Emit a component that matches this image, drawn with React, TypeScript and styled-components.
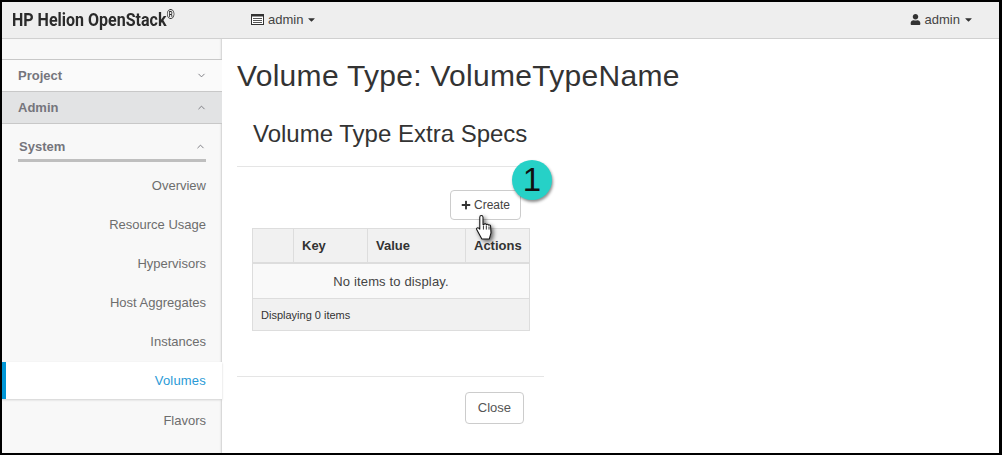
import styled, { createGlobalStyle } from "styled-components";
import { FaPlus, FaUser, FaCaretDown } from "react-icons/fa";
import { LuChevronDown, LuChevronUp } from "react-icons/lu";

const Global = createGlobalStyle`
    html, body {
        margin: 0;
        padding: 0;
        background: #fff;
    }
`;

const Frame = styled.div`
    width: 1002px;
    height: 455px;
    box-sizing: border-box;
    border: 2px solid #000;
    border-right-width: 3px;
    display: flex;
    flex-direction: column;
    overflow: hidden;
    font-family: "Liberation Sans", Arial, sans-serif;
    color: #333;
`;

const Navbar = styled.div`
    height: 37px;
    flex: none;
    box-sizing: border-box;
    background: #eeeeee;
    border-bottom: 1px solid #d0d0d0;
    display: flex;
    align-items: center;
    padding: 0 25px 2px 10px;
    font-size: 13px;
`;

const BrandSlot = styled.div`
    width: 239px;
`;

const Brand = styled.div`
    font-family: "Roboto", sans-serif;
    font-weight: 700;
    font-size: 18px;
    color: #2b2b2b;
    white-space: nowrap;
    transform: scaleX(0.89);
    transform-origin: left center;
    sup {
        font-size: 12px;
        line-height: 0;
    }
`;

const NavMenu = styled.div`
    display: flex;
    align-items: center;
    gap: 4px;
    color: #444;
    svg:last-child {
        margin-left: -1px;
    }
`;

const Spacer = styled.div`
    flex: 1;
`;

const Body = styled.div`
    flex: 1;
    display: flex;
    min-height: 0;
`;

const Sidebar = styled.div`
    width: 220px;
    flex: none;
    box-sizing: border-box;
    background: #f8f8f8;
    padding-top: 20px;
    box-shadow: inset -2px 0 2px -1px #cfcfcf;
`;

const Section = styled.div<{ $active?: boolean }>`
    height: 32px;
    box-sizing: border-box;
    display: flex;
    align-items: center;
    justify-content: space-between;
    padding: 0 15px 0 16px;
    border-top: 1px solid #c8c8c8;
    font-size: 13px;
    font-weight: 700;
    color: #75757c;
    background: ${props => props.$active ? "#e2e3e4" : "#fafafa"};
`;

const SystemGroup = styled.div`
    border-top: 1px solid #c8c8c8;
    margin-bottom: 4px;
    padding: 0 16px;
`;

const SystemHeader = styled.div`
    height: 38px;
    box-sizing: border-box;
    padding: 9px 0 0 1px;
    display: flex;
    align-items: center;
    justify-content: space-between;
    border-bottom: 3px solid #bfbfbf;
    font-size: 13px;
    font-weight: 700;
    color: #75757c;
`;

const NavItem = styled.div<{ $selected?: boolean }>`
    height: ${props => props.$selected ? "37px" : "39px"};
    margin: ${props => props.$selected ? "1px 0 2px" : "0"};
    box-sizing: border-box;
    display: flex;
    align-items: center;
    justify-content: flex-end;
    padding-right: 16px;
    font-size: 13px;
    letter-spacing: ${props => props.$selected ? "0.2px" : "0"};
    color: ${props => props.$selected ? "#2a9ad6" : "#6d6d6d"};
    background: ${props => props.$selected ? "#fff" : "transparent"};
    border-left: ${props => props.$selected ? "4px solid #0096d6" : "none"};
    box-shadow: ${props => props.$selected ? "0 1px 2px #d0d0d0" : "none"};
`;

const Main = styled.div`
    flex: 1;
    padding: 0 15px;
    min-width: 0;
`;

const Title = styled.h1`
    font-size: 30px;
    font-weight: 400;
    line-height: 34px;
    letter-spacing: 0.3px;
    margin: 20px 0 0 0;
    color: #333;
`;

const Panel = styled.div`
    width: 307px;
    position: relative;
`;

const PanelTitle = styled.h2`
    font-size: 24px;
    font-weight: 400;
    line-height: 26px;
    margin: 28px 0 0 16px;
    padding: 0;
    color: #333;
    white-space: nowrap;
`;

const Rule = styled.div`
    height: 1px;
    background: #e5e5e5;
`;

const TopRule = styled(Rule)`
    margin-top: 19px;
`;

const BottomRule = styled(Rule)`
    margin-top: 45px;
`;

const Actions = styled.div`
    display: flex;
    justify-content: flex-end;
    padding: 23px 23px 8px 0;
`;

const Button = styled.div`
    height: 30px;
    box-sizing: border-box;
    padding: 0 10px;
    display: flex;
    align-items: center;
    gap: 3px;
    border: 1px solid #ccc;
    border-radius: 4px;
    background: #fff;
    font-size: 12px;
    color: #444;
    svg {
        color: #333;
    }
`;

const Table = styled.div`
    margin-left: 15px;
    width: 278px;
    box-sizing: border-box;
    border: 1px solid #ddd;
    font-size: 13px;
`;

const HeadRow = styled.div`
    display: grid;
    grid-template-columns: 40px 74px 98px 1fr;
    height: 35px;
    box-sizing: border-box;
    background: #f1f1f1;
    border-bottom: 2px solid #ddd;
`;

const HeadCell = styled.div`
    display: flex;
    align-items: center;
    padding-left: 8px;
    font-weight: 700;
    color: #333;
    white-space: nowrap;
    border-left: 1px solid #ddd;
    &:first-child {
        border-left: none;
    }
`;

const EmptyRow = styled.div`
    height: 35px;
    box-sizing: border-box;
    background: #f9f9f9;
    border-bottom: 1px solid #ddd;
    display: flex;
    align-items: center;
    justify-content: center;
    letter-spacing: 0.15px;
    color: #444;
`;

const FootRow = styled.div`
    height: 31px;
    display: flex;
    align-items: center;
    padding-left: 8px;
    background: #f1f1f1;
    font-size: 11px;
    color: #333;
`;

const Footer = styled.div`
    display: flex;
    justify-content: flex-end;
    padding: 15px 20px 0 0;
`;

const CloseButton = styled(Button)`
    height: 32px;
    padding: 0 12px 2px;
    font-size: 13px;
    color: #555;
`;

const Badge = styled.div`
    position: absolute;
    left: 275px;
    top: 39px;
    width: 40px;
    height: 40px;
    border-radius: 50%;
    background: #26d1c7;
    box-shadow: 1px 2px 3px rgba(0, 0, 0, 0.45);
    display: flex;
    align-items: center;
    justify-content: center;
    font-size: 33px;
    color: #111;
`;

const Cursor = styled.svg`
    position: absolute;
    left: 238px;
    top: 93px;
    filter: drop-shadow(2px 2px 2px rgba(0, 0, 0, 0.6));
`;

function ConsoleIcon() {
    return (
        <svg width="13" height="11" viewBox="0 0 13 11">
            <rect x="0.5" y="0.5" width="12" height="10" fill="#fff" stroke="#333" />
            <rect x="0" y="0" width="13" height="2.5" fill="#333" />
            <path d="M2 4.5h9M2 6.5h9M2 8.5h9" stroke="#555" />
        </svg>
    );
}

export default function App() {
    const items = ["Overview", "Resource Usage", "Hypervisors", "Host Aggregates", "Instances"];

    return (
        <Frame>
            <Global />
            <Navbar>
                <BrandSlot>
                    <Brand>HP Helion OpenStack<sup>®</sup></Brand>
                </BrandSlot>
                <NavMenu>
                    <ConsoleIcon />
                    admin
                    <FaCaretDown size={11} color="#333" />
                </NavMenu>
                <Spacer />
                <NavMenu>
                    <FaUser size={11} color="#333" />
                    admin
                    <FaCaretDown size={11} color="#333" />
                </NavMenu>
            </Navbar>
            <Body>
                <Sidebar>
                    <Section>Project <LuChevronDown size={11} /></Section>
                    <Section $active>Admin <LuChevronUp size={11} /></Section>
                    <SystemGroup>
                        <SystemHeader>System <LuChevronUp size={11} /></SystemHeader>
                    </SystemGroup>
                    {items.map((x: string, i: number) => <NavItem key={i}>{x}</NavItem>)}
                    <NavItem $selected>Volumes</NavItem>
                    <NavItem>Flavors</NavItem>
                </Sidebar>
                <Main>
                    <Title>Volume Type: VolumeTypeName</Title>
                    <Panel>
                        <PanelTitle>Volume Type Extra Specs</PanelTitle>
                        <TopRule />
                        <Actions>
                            <Button><FaPlus size={10} /> Create</Button>
                        </Actions>
                        <Table>
                            <HeadRow>
                                <HeadCell />
                                <HeadCell>Key</HeadCell>
                                <HeadCell>Value</HeadCell>
                                <HeadCell>Actions</HeadCell>
                            </HeadRow>
                            <EmptyRow>No items to display.</EmptyRow>
                            <FootRow>Displaying 0 items</FootRow>
                        </Table>
                        <BottomRule />
                        <Footer>
                            <CloseButton>Close</CloseButton>
                        </Footer>
                        <Badge>1</Badge>
                        <Cursor width="21" height="27" viewBox="0 0 20 26">
                            <path d="M6 1.5c1 0 1.6.7 1.6 1.7v7l1-.2c.3-.8 1.9-.8 2.2.2.4-.6 1.9-.5 2.1.5.6-.4 1.9-.1 2 1l.4 6.5-1.6 5.8H6.5L1.5 15c-.6-1 .6-2.4 2-1.4l1 1V3.2c0-1 .6-1.7 1.5-1.7z" fill="#fff" stroke="#111" strokeWidth="1" strokeLinejoin="round" />
                            <path d="M8 11v4M10.8 11v4M13.4 12v3" stroke="#111" strokeWidth="0.8" />
                        </Cursor>
                    </Panel>
                </Main>
            </Body>
        </Frame>
    );
}
